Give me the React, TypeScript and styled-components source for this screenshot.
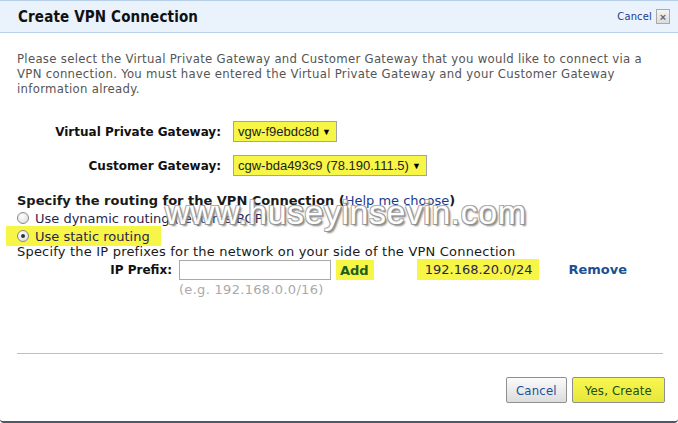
import React from "react";
import styled, { createGlobalStyle } from "styled-components";

const GlobalStyle = createGlobalStyle`
  html, body { margin: 0; padding: 0; background: #fff; }
  * { box-sizing: border-box; }
`;

const HL = "#f7f546";

const Dialog = styled.div`
  position: relative;
  width: 678px;
  height: 423px;
  display: flex;
  flex-direction: column;
  background: #fff;
  border-top: 1px solid #b6cde6;
  border-bottom: 2px solid #4d5866;
  border-radius: 0 0 4px 4px;
  overflow: hidden;
`;

const Header = styled.div`
  height: 32px;
  flex: none;
  display: flex;
  align-items: center;
  justify-content: space-between;
  padding: 0 8px 0 18px;
  background: #eaf2fc;
  border-bottom: 1px solid #b9d3ee;
`;

const Title = styled.div`
  font-family: "DejaVu Sans Condensed", "DejaVu Sans", sans-serif;
  font-weight: bold;
  font-size: 15px;
  letter-spacing: 0.15px;
  color: #111;
  padding-top: 1px;
`;

const CloseGroup = styled.div`
  display: flex;
  align-items: center;
  gap: 4px;
`;

const CancelLink = styled.span`
  font-family: "DejaVu Sans Condensed", "DejaVu Sans", sans-serif;
  font-size: 11px;
  letter-spacing: 0.2px;
  color: #1c3a8c;
`;

const XBox = styled.span`
  width: 14px;
  height: 15px;
  display: flex;
  align-items: center;
  justify-content: center;
  border: 1px solid #a9a9a9;
  background: linear-gradient(#f4f4f4, #dcdcdc);
  font-family: "Liberation Sans", sans-serif;
  font-size: 11px;
  font-weight: bold;
  color: #666;
`;

const Body = styled.div`
  display: flex;
  flex-direction: column;
  padding: 18px 15px 0 17px;
`;

const Intro = styled.p`
  margin: 0;
  font-family: "DejaVu Sans Condensed", "DejaVu Sans", sans-serif;
  font-size: 13px;
  line-height: 15px;
  letter-spacing: 0.3px;
  color: #555;
`;

const GatewayGrid = styled.div`
  display: grid;
  grid-template-columns: 204px auto;
  column-gap: 12px;
  row-gap: 13px;
  align-items: center;
  justify-items: start;
  margin-top: 25px;
`;

const FieldLabel = styled.div`
  justify-self: end;
  font-family: "DejaVu Sans", Verdana, sans-serif;
  font-weight: bold;
  font-size: 12px;
  color: #111;
`;

const Select = styled.div<{ $w: number }>`
  width: ${(p) => p.$w}px;
  height: 21px;
  display: flex;
  align-items: center;
  justify-content: space-between;
  padding: 0 5px 0 4px;
  background: ${HL};
  border: 1px solid #a4a4a4;
  font-family: "Liberation Sans", Arial, sans-serif;
  font-size: 13px;
  color: #222;
`;

const Caret = styled.span`
  font-size: 9px;
  color: #000;
`;

const Routing = styled.div`
  display: flex;
  flex-direction: column;
  margin-top: 14px;
  font-family: "DejaVu Sans", Verdana, sans-serif;
  font-size: 13px;
  color: #1a1a1a;
`;

const SectionTitle = styled.div`
  height: 20px;
  display: flex;
  align-items: center;
  font-weight: bold;
  white-space: pre;
`;

const HelpLink = styled.span`
  font-weight: normal;
  color: #1c3a8c;
`;

const RadioRow = styled.div<{ $hl?: boolean }>`
  display: flex;
  align-items: center;
  gap: 6px;
  height: ${(p) => (p.$hl ? 20 : 16)}px;
  align-self: flex-start;
  margin-left: ${(p) => (p.$hl ? -11 : 0)}px;
  padding: ${(p) => (p.$hl ? "0 11px 0 11px" : "0")};
  background: ${(p) => (p.$hl ? HL : "transparent")};
  color: #2a1f4a;
`;

const Radio = styled.span<{ $on?: boolean }>`
  width: 12px;
  height: 12px;
  border-radius: 50%;
  border: 1px solid #8a8a8a;
  background: radial-gradient(circle at 40% 35%, #fff, #d8d8d8);
  display: flex;
  align-items: center;
  justify-content: center;
  &::after {
    content: "";
    display: ${(p) => (p.$on ? "block" : "none")};
    width: 4px;
    height: 4px;
    border-radius: 50%;
    background: #333;
  }
`;

const Hint = styled.div`
  height: 12px;
  line-height: 12px;
  letter-spacing: 0.2px;
`;

const PrefixRow = styled.div`
  height: 23px;
  display: grid;
  grid-template-columns: 155px 152px auto 1fr auto;
  column-gap: 7px;
  align-items: center;
`;

const PrefixLabel = styled.div`
  justify-self: end;
  font-weight: bold;
  font-size: 12px;
  color: #111;
`;

const TextInput = styled.div`
  width: 152px;
  height: 20px;
  border: 1px solid #a9a9a9;
  background: #fff;
`;

const AddBox = styled.div`
  margin-left: -2px;
  padding: 3px 5px 2px 4px;
  background: ${HL};
  font-weight: bold;
  color: #1e5d1e;
`;

const PrefixChip = styled.div`
  justify-self: start;
  margin-left: 36px;
  padding: 3px 7px 3px 8px;
  background: ${HL};
  color: #2a1f4a;
`;

const RemoveLink = styled.div`
  margin-right: 36px;
  font-weight: bold;
  color: #1e4f8f;
`;

const Example = styled.div`
  height: 16px;
  line-height: 16px;
  margin-left: 162px;
  margin-top: 1px;
  color: #aaa;
  letter-spacing: 0.3px;
`;

const Divider = styled.hr`
  margin: 55px 0 0 0;
  border: none;
  border-top: 1px solid #c0c0c0;
`;

const Footer = styled.div`
  display: flex;
  justify-content: flex-end;
  gap: 5px;
  padding: 23px 13px 0 0;
`;

const Button = styled.div<{ $primary?: boolean }>`
  height: 26px;
  display: flex;
  align-items: center;
  padding: 0 ${(p) => (p.$primary ? 12 : 9)}px;
  border: 1px solid #8f8f8f;
  border-radius: 2px;
  background: ${(p) =>
    p.$primary ? "linear-gradient(#f7f750, #e6e63a)" : "linear-gradient(#fbfbfb, #dcdcdc)"};
  font-family: "DejaVu Sans Condensed", "DejaVu Sans", sans-serif;
  font-size: 13px;
  letter-spacing: 0.2px;
  color: ${(p) => (p.$primary ? "#234c16" : "#1c4f9c")};
`;

const Watermark = styled.div`
  position: absolute;
  left: 165px;
  top: 192px;
  font-family: "Liberation Sans", Arial, sans-serif;
  font-size: 34px;
  letter-spacing: 0.5px;
  color: #fff;
  text-shadow: 1px 1px 0 #888, -1px -1px 0 #aaa, 1px -1px 0 #999, -1px 1px 0 #999, 2px 2px 2px #777;
  opacity: 0.92;
  pointer-events: none;
`;

export default function App() {
  return (
    <>
      <GlobalStyle />
      <Dialog>
        <Header>
          <Title>Create VPN Connection</Title>
          <CloseGroup>
            <CancelLink>Cancel</CancelLink>
            <XBox>×</XBox>
          </CloseGroup>
        </Header>
        <Body>
          <Intro>
            Please select the Virtual Private Gateway and Customer Gateway that you would like to connect via a
            VPN connection. You must have entered the Virtual Private Gateway and your Customer Gateway
            information already.
          </Intro>
          <GatewayGrid>
            <FieldLabel>Virtual Private Gateway:</FieldLabel>
            <Select $w={104}>
              vgw-f9ebdc8d <Caret>▼</Caret>
            </Select>
            <FieldLabel>Customer Gateway:</FieldLabel>
            <Select $w={194}>
              cgw-bda493c9 (78.190.111.5) <Caret>▼</Caret>
            </Select>
          </GatewayGrid>
          <Routing>
            <SectionTitle>
              Specify the routing for the VPN Connection (<HelpLink>Help me choose</HelpLink>)
            </SectionTitle>
            <RadioRow>
              <Radio />
              Use dynamic routing (requires BGP)
            </RadioRow>
            <RadioRow $hl>
              <Radio $on />
              Use static routing
            </RadioRow>
            <Hint>Specify the IP prefixes for the network on your side of the VPN Connection</Hint>
            <PrefixRow>
              <PrefixLabel>IP Prefix:</PrefixLabel>
              <TextInput />
              <AddBox>Add</AddBox>
              <PrefixChip>192.168.20.0/24</PrefixChip>
              <RemoveLink>Remove</RemoveLink>
            </PrefixRow>
            <Example>(e.g. 192.168.0.0/16)</Example>
          </Routing>
          <Divider />
        </Body>
        <Footer>
          <Button>Cancel</Button>
          <Button $primary>Yes, Create</Button>
        </Footer>
        <Watermark>www.huseyinsevin.com</Watermark>
      </Dialog>
    </>
  );
}
